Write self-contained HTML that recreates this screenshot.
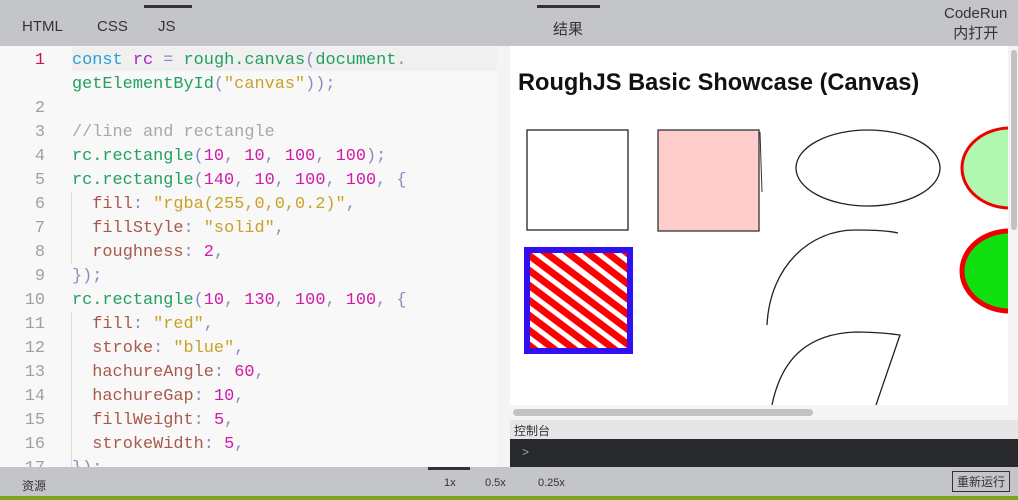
<!DOCTYPE html><html><head><meta charset="utf-8"><style>
*{margin:0;padding:0;box-sizing:border-box}
body{width:1018px;height:500px;overflow:hidden;background:#c4c5c9;font-family:"Liberation Sans","Noto Sans CJK SC",sans-serif;position:relative}
.top{position:absolute;left:0;top:0;width:1018px;height:46px;background:#c4c5c9}
.tab{position:absolute;top:18px;font-size:15px;color:#333}
.ed{position:absolute;left:0;top:46px;width:497px;height:421px;background:#f8f8f8;overflow:hidden}
.code{position:absolute;left:0;top:0;font-family:"Liberation Mono",monospace;font-size:16.9px;line-height:24px;white-space:pre;color:#8a8cc0}
.ln{position:absolute;left:0;width:45px;text-align:right;color:#a0a0a0;font-family:"Liberation Mono",monospace;font-size:16.9px;line-height:24px}
.k{color:#2a9fd6}.v{color:#a626c4}.f{color:#21a060}.s{color:#c9a227}.c{color:#a8a8a8}.p{color:#a85a4a}.n{color:#d01aa8}
.pv{position:absolute;left:510px;top:46px;width:498px;height:359px;background:#fff;overflow:hidden}
.bar{position:absolute;left:0;top:467px;width:1018px;height:29px;background:#c4c5c9;font-size:12px;color:#333}
</style></head><body>
<div class="top">
<div style="position:absolute;left:144px;top:5px;width:48px;height:3px;background:#333"></div>
<div style="position:absolute;left:537px;top:5px;width:63px;height:3px;background:#333"></div>
<span class="tab" style="left:22px">HTML</span><span class="tab" style="left:97px">CSS</span><span class="tab" style="left:158px">JS</span>
<span class="tab" style="left:553px">结果</span>
<span style="position:absolute;left:944px;top:4px;font-size:15px;color:#333;line-height:20px;text-align:center">CodeRun<br>内打开</span>
</div>
<div class="ed">
<div style="position:absolute;left:72px;top:1px;width:425px;height:24px;background:#f0f0f0"></div>
<div style="position:absolute;left:71px;top:146px;width:1px;height:72px;background:#ddd"></div>
<div style="position:absolute;left:71px;top:266px;width:1px;height:155px;background:#ddd"></div>
<div class="ln" style="top:3px;color:#d0104c">1</div>
<div class="ln" style="top:51px">2</div><div class="ln" style="top:75px">3</div><div class="ln" style="top:99px">4</div><div class="ln" style="top:123px">5</div><div class="ln" style="top:147px">6</div><div class="ln" style="top:171px">7</div><div class="ln" style="top:195px">8</div><div class="ln" style="top:219px">9</div><div class="ln" style="top:243px">10</div><div class="ln" style="top:267px">11</div><div class="ln" style="top:291px">12</div><div class="ln" style="top:315px">13</div><div class="ln" style="top:339px">14</div><div class="ln" style="top:363px">15</div><div class="ln" style="top:387px">16</div><div class="ln" style="top:411px">17</div>
<div class="code" style="left:72px;top:3px"><span class="k">const</span> <span class="v">rc</span> = <span class="f">rough.canvas</span>(<span class="f">document</span>.
<span class="f">getElementById</span>(<span class="s">"canvas"</span>));

<span class="c">//line and rectangle</span>
<span class="f">rc.rectangle</span>(<span class="n">10</span>, <span class="n">10</span>, <span class="n">100</span>, <span class="n">100</span>);
<span class="f">rc.rectangle</span>(<span class="n">140</span>, <span class="n">10</span>, <span class="n">100</span>, <span class="n">100</span>, {
  <span class="p">fill</span>: <span class="s">"rgba(255,0,0,0.2)"</span>,
  <span class="p">fillStyle</span>: <span class="s">"solid"</span>,
  <span class="p">roughness</span>: <span class="n">2</span>,
});
<span class="f">rc.rectangle</span>(<span class="n">10</span>, <span class="n">130</span>, <span class="n">100</span>, <span class="n">100</span>, {
  <span class="p">fill</span>: <span class="s">"red"</span>,
  <span class="p">stroke</span>: <span class="s">"blue"</span>,
  <span class="p">hachureAngle</span>: <span class="n">60</span>,
  <span class="p">hachureGap</span>: <span class="n">10</span>,
  <span class="p">fillWeight</span>: <span class="n">5</span>,
  <span class="p">strokeWidth</span>: <span class="n">5</span>,
});</div>
</div>
<div style="position:absolute;left:497px;top:46px;width:13px;height:421px;background:#f4f4f4"></div>
<div style="position:absolute;left:510px;top:405px;width:508px;height:15px;background:#f4f4f4"></div>
<div style="position:absolute;left:513px;top:409px;width:300px;height:7px;border-radius:4px;background:#c2c2c2"></div>
<div style="position:absolute;left:1008px;top:46px;width:10px;height:359px;background:#f4f4f4"></div>
<div style="position:absolute;left:1011px;top:50px;width:6px;height:180px;border-radius:3px;background:#c2c2c2"></div>
<div class="pv">
<div style="position:absolute;left:8px;top:24px;font-size:23.6px;font-weight:bold;color:#111">RoughJS Basic Showcase (Canvas)</div>
<svg width="498" height="359" style="position:absolute;left:0;top:0" fill="none">
<rect x="17" y="84" width="101" height="100" stroke="#222" stroke-width="1.3"/>
<rect x="148" y="84" width="101" height="101" fill="#ffcccc" stroke="#333" stroke-width="1.3"/>
<path d="M250 86 L252 146" stroke="#333"/>
<ellipse cx="358" cy="122" rx="72" ry="38" stroke="#222" stroke-width="1.3"/>
<ellipse cx="500" cy="122" rx="48" ry="40" fill="#b0f8b0" stroke="#e00" stroke-width="3"/>
<ellipse cx="500" cy="225" rx="48" ry="40" fill="#10e010" stroke="#e00" stroke-width="5"/>
<rect x="17" y="204" width="103" height="101" fill="#fff" stroke="#3010f0" stroke-width="6"/>
<clipPath id="cp"><rect x="20" y="207" width="97" height="95"/></clipPath>
<g clip-path="url(#cp)" stroke="#f00" stroke-width="7">
<path d="M0 180 L140 285 M0 195 L140 300 M0 210 L140 315 M0 225 L140 330 M0 240 L120 330 M0 255 L100 330 M0 270 L80 330 M0 285 L60 330 M0 300 L40 330 M10 170 L140 270 M30 170 L140 255 M50 170 L140 240 M70 170 L140 225 M90 170 L140 210"/>
</g>
<path d="M257 279 C260 220 300 184 345 184 C365 184 380 185 388 187" stroke="#222" stroke-width="1.3"/>
<path d="M262 359 C272 310 300 288 345 286 C370 286 382 288 390 289 L366 359" stroke="#222" stroke-width="1.3"/>
</svg>
</div>
<div style="position:absolute;left:510px;top:420px;width:508px;height:19px;background:#e6e6e6;font-size:12px;color:#333;padding:2px 0 0 4px">控制台</div>
<div style="position:absolute;left:510px;top:439px;width:508px;height:28px;background:#27292d;color:#aaa;font-size:12px;padding:6px 0 0 12px">&gt;</div>
<div class="bar">
<span style="position:absolute;left:22px;top:10px">资源</span>
<div style="position:absolute;left:428px;top:0;width:42px;height:3px;background:#333"></div>
<span style="position:absolute;left:444px;top:10px;font-size:11px">1x</span>
<span style="position:absolute;left:485px;top:10px;font-size:11px">0.5x</span>
<span style="position:absolute;left:538px;top:10px;font-size:11px">0.25x</span>
<span style="position:absolute;left:952px;top:4px;border:1px solid #333;padding:1px 4px;font-size:12px">重新运行</span>
</div>
<div style="position:absolute;left:0;top:496px;width:1018px;height:4px;background:#7ca41c"></div>
</body></html>
